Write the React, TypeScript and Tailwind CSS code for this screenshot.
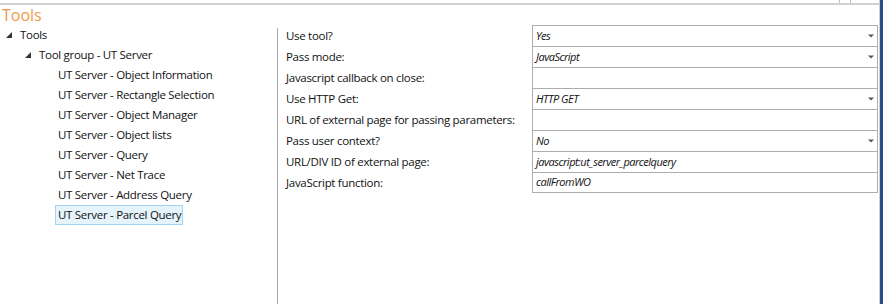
import React from 'react';

const treeItems = [
  'UT Server - Object Information',
  'UT Server - Rectangle Selection',
  'UT Server - Object Manager',
  'UT Server - Object lists',
  'UT Server - Query',
  'UT Server - Net Trace',
  'UT Server - Address Query',
  'UT Server - Parcel Query',
];

type Field = { label: string; value: string; dropdown?: boolean };

const fields: Field[] = [
  { label: 'Use tool?', value: 'Yes', dropdown: true },
  { label: 'Pass mode:', value: 'JavaScript', dropdown: true },
  { label: 'Javascript callback on close:', value: '' },
  { label: 'Use HTTP Get:', value: 'HTTP GET', dropdown: true },
  { label: 'URL of external page for passing parameters:', value: '' },
  { label: 'Pass user context?', value: 'No', dropdown: true },
  { label: 'URL/DIV ID of external page:', value: 'javascript:ut_server_parcelquery' },
  { label: 'JavaScript function:', value: 'callFromWO' },
];

function Expander() {
  return (
    <svg width="7" height="6" viewBox="0 0 7 6" className="shrink-0">
      <polygon points="6,0 6,6 0,6" fill="#333" />
    </svg>
  );
}

function Caret() {
  return (
    <svg width="6" height="4" viewBox="0 0 6 4" className="shrink-0">
      <polygon points="0,0.5 6,0.5 3,3.5" fill="#555" />
    </svg>
  );
}

export default function App() {
  return (
    <div className="flex h-[304px] w-[883px] overflow-hidden bg-white font-['Open_Sans',sans-serif] text-[11.5px] tracking-[-0.3px] whitespace-nowrap text-[#111]">
      <div className="flex flex-1 flex-col">
        {/* window strip */}
        <div className="h-[5px] border-b-2 border-[#cfcfcf]">
          <div className="ml-[839px] h-[3px] w-[12px] border-x border-[#bdbdbd]" />
        </div>

        <div className="h-[20px] pl-[2px] text-[16px] leading-[20px] tracking-normal text-[#ee9a4c]">Tools</div>

        <div className="flex flex-1">
          {/* tree */}
          <div className="w-[277px] shrink-0">
            <div className="flex h-[20px] items-center pl-[6px]">
              <Expander />
              <span className="ml-[7px]">Tools</span>
            </div>
            <div className="flex h-[20px] items-center pl-[25px]">
              <Expander />
              <span className="ml-[7px]">Tool group - UT Server</span>
            </div>
            {treeItems.map((t, i) => {
              const sel = i === treeItems.length - 1;
              return (
                <div key={t} className="flex h-[20px] items-center pl-[55px]">
                  <span
                    className={
                      sel
                        ? 'h-[20px] w-[128px] border border-[#9fd5f2] bg-[#e5f3fb] pl-[2px] leading-[18px]'
                        : 'pl-[3px]'
                    }
                  >
                    {t}
                  </span>
                </div>
              );
            })}
          </div>

          <div className="mt-[3px] w-px bg-[#a8a8a8]" />

          {/* properties */}
          <div className="flex flex-1 flex-col pl-[8px]">
            {fields.map((f, i) => (
              <div key={f.label} className="flex h-[21px]">
                <div className="flex w-[246px] shrink-0 items-center">{f.label}</div>
                <div
                  className={`flex w-[346px] items-center border-x border-t border-[#adadad] pl-[3px] pr-[3px] text-[11px] tracking-[-0.5px] italic ${
                    i === fields.length - 1 ? 'border-b' : ''
                  }`}
                >
                  <span className="flex-1">{f.value}</span>
                  {f.dropdown && <Caret />}
                </div>
              </div>
            ))}
          </div>
        </div>
      </div>
      <div className="w-px bg-[#c9d0db]" />
      <div className="w-[3px] bg-[#2f4d83]" />
    </div>
  );
}
